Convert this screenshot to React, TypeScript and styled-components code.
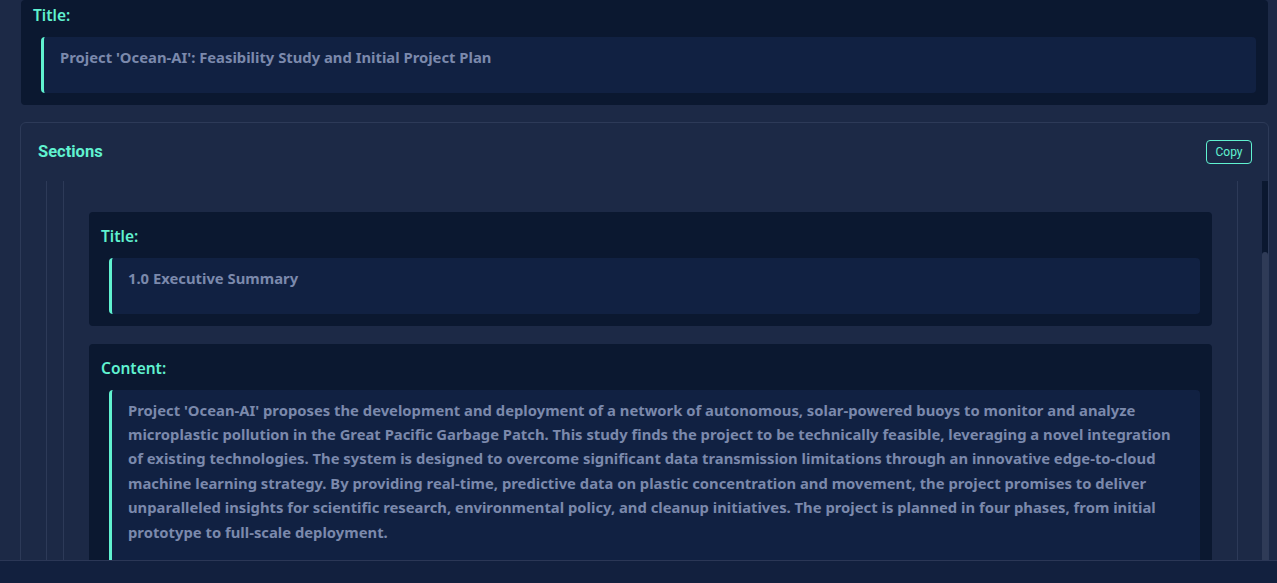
import React, { useLayoutEffect, useRef } from 'react';
import styled, { createGlobalStyle } from 'styled-components';

const TEAL = '#60f2d0';
const LINE = '#2d3a58';

const GlobalStyle = createGlobalStyle`
  html, body { margin: 0; padding: 0; background: #1c2946; overflow: hidden; }
  * { box-sizing: border-box; }
`;

const Page = styled.div`
  display: flex;
  flex-direction: column;
  gap: 17px;
  padding: 0 8px 0 20px;
`;

const FieldCard = styled.section<{ $first?: boolean }>`
  background: #0b1830;
  border-radius: 4px;
  padding: ${(p) => (p.$first ? '3px 12px 12px' : '12px 12px 12px')};
  margin: ${(p) => (p.$first ? '0 1px' : '0')};
`;

const FieldLabel = styled.div`
  color: ${TEAL};
  font-family: 'Noto Sans', 'Open Sans', sans-serif;
  font-weight: 600;
  font-size: 15.5px;
  line-height: 25.6px;
  margin-bottom: 8px;
`;

const ValueBlock = styled.div`
  margin-left: 8px;
  background: #112142;
  border-left: 3px solid ${TEAL};
  border-radius: 4px;
  padding: 8px 16px;
`;

const ValueText = styled.p`
  margin: 0 0 16px;
  color: #7b89ac;
  font-family: 'Noto Sans', 'Open Sans', sans-serif;
  font-weight: 700;
  font-size: 14.8px;
  line-height: 24.4px;
  white-space: pre-wrap;
`;

const SectionsCard = styled.section`
  border: 1px solid ${LINE};
  border-radius: 6px;
  background: #1c2946;
`;

const CardHeader = styled.header`
  display: flex;
  align-items: center;
  justify-content: space-between;
  padding: 17px 16px 17px 17px;
`;

const CardTitle = styled.h2`
  margin: 0;
  color: ${TEAL};
  font-family: Roboto, 'Liberation Sans', sans-serif;
  font-weight: 700;
  font-size: 16.5px;
  line-height: 24px;
`;

const CopyButton = styled.button`
  height: 24px;
  width: 46px;
  padding: 0;
  border: 1px solid ${TEAL};
  border-radius: 4px;
  background: transparent;
  color: ${TEAL};
  font-family: Roboto, 'Liberation Sans', sans-serif;
  font-size: 12px;
  font-weight: 400;
  cursor: pointer;
`;

const SectionsBody = styled.div`
  display: flex;
  height: 600px;
`;

const ScrollViewport = styled.div`
  flex: 1;
  min-width: 0;
  margin-left: 25px;
  border-left: 1px solid ${LINE};
  overflow: hidden;
  padding-left: 16px;
`;

const ScrollTrack = styled.div`
  width: 6px;
  flex: none;
  background: #0b1830;
  display: flex;
  flex-direction: column;
`;

const ScrollThumb = styled.div`
  margin-top: 71px;
  height: 400px;
  background: #2f3b57;
  border-radius: 3px 3px 0 0;
`;

const Item = styled.div`
  margin-right: 24px;
  border-left: 1px solid ${LINE};
  border-right: 1px solid ${LINE};
  padding: 137px 25px 25px;
  min-height: 900px;
  display: flex;
  flex-direction: column;
  gap: 18px;
`;

const Footer = styled.footer`
  position: fixed;
  left: 0;
  right: 0;
  bottom: 0;
  height: 23px;
  background: #12203e;
  border-top: 1px solid #2b3756;
`;

const SUMMARY =
  "Project 'Ocean-AI' proposes the development and deployment of a network of autonomous, solar-powered buoys to monitor and analyze microplastic pollution in the Great Pacific Garbage Patch. This study finds the project to be technically feasible, leveraging a novel integration of existing technologies. The system is designed to overcome significant data transmission limitations through an innovative edge-to-cloud machine learning strategy. By providing real-time, predictive data on plastic concentration and movement, the project promises to deliver unparalleled insights for scientific research, environmental policy, and cleanup initiatives. The project is planned in four phases, from initial prototype to full-scale deployment.";

const Field: React.FC<{ label: string; value: string; first?: boolean }> = ({ label, value, first }) => (
  <FieldCard $first={first}>
    <FieldLabel>{label}</FieldLabel>
    <ValueBlock>
      <ValueText>{value}</ValueText>
    </ValueBlock>
  </FieldCard>
);

export default function App() {
  const scrollRef = useRef<HTMLDivElement>(null);
  useLayoutEffect(() => {
    if (scrollRef.current) scrollRef.current.scrollTop = 106;
  }, []);
  return (
    <>
      <GlobalStyle />
      <Page>
        <Field first label="Title:" value="Project 'Ocean-AI': Feasibility Study and Initial Project Plan" />
        <SectionsCard>
          <CardHeader>
            <CardTitle>Sections</CardTitle>
            <CopyButton>Copy</CopyButton>
          </CardHeader>
          <SectionsBody>
            <ScrollViewport ref={scrollRef}>
              <Item>
                <Field label="Title:" value="1.0 Executive Summary" />
                <Field label="Content:" value={SUMMARY} />
              </Item>
            </ScrollViewport>
            <ScrollTrack>
              <ScrollThumb />
            </ScrollTrack>
          </SectionsBody>
        </SectionsCard>
      </Page>
      <Footer />
    </>
  );
}
